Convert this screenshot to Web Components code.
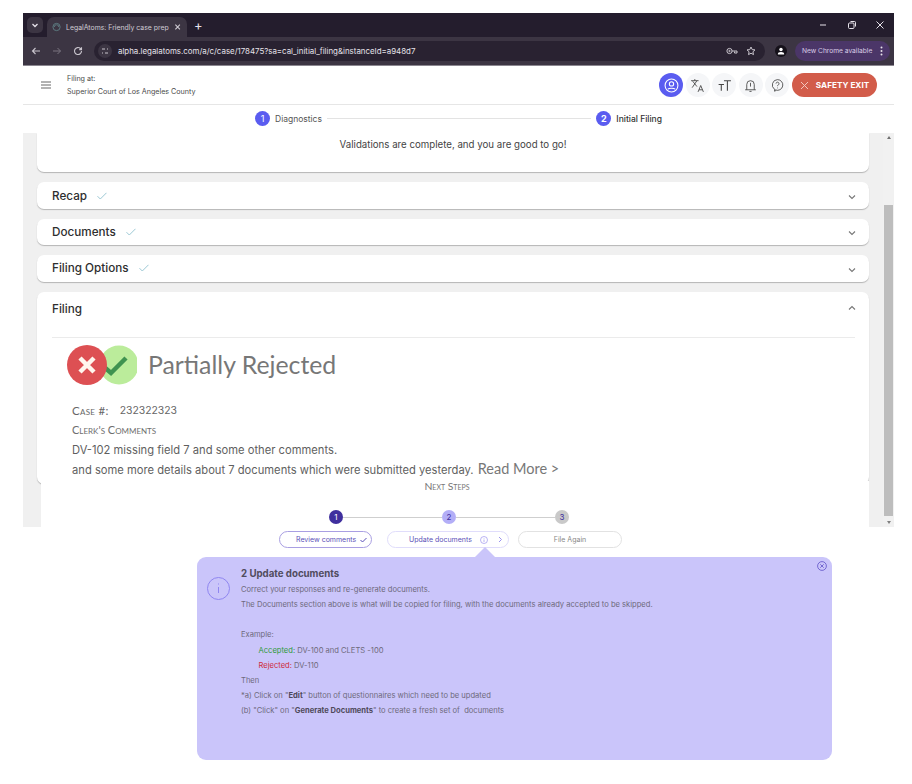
<!DOCTYPE html>
<html lang="en">
<head>
<meta charset="utf-8">
<title>LegalAtoms</title>
<style>
    html, body { margin: 0; background: #fff; font-family: Inter, "Liberation Sans", sans-serif; }
    body { padding: 13px 18px 0 23px; height: 771px; overflow: hidden; }
</style>
</head>
<body>
<chrome-bar></chrome-bar>
<app-header></app-header>
<app-stepper></app-stepper>
<case-content>
    <accordion-card class="first" plain>
        <p style="margin:0;text-align:center;font-size:9.7px;color:#444;">Validations are complete, and you are good to go!</p>
    </accordion-card>
    <accordion-card titulo="Recap" checked></accordion-card>
    <accordion-card titulo="Documents" checked></accordion-card>
    <accordion-card titulo="Filing Options" checked></accordion-card>
    <accordion-card titulo="Filing" open>
        <filing-status></filing-status>
    </accordion-card>
</case-content>
<next-steps></next-steps>

<script>
class ChromeBar extends HTMLElement {
    connectedCallback() {
        this.attachShadow({ mode: 'open' });
        this.shadowRoot.innerHTML = /* html */`
        <style>
            :host { display: block; background: #241d2d; color: #e6e2ea; font-size: 9px; }
            svg { display: block; fill: none; stroke: currentColor; }
            .tabs { height: 24px; display: flex; align-items: flex-end; padding-left: 4px; }
            .tab-list {
                inline-size: 16px; block-size: 16px; margin-bottom: 4px; border-radius: 5px; background: #3c3543;
                display: flex; align-items: center; justify-content: center;
            }
            .tab {
                inline-size: 140px; block-size: 20px; margin-left: 4px; border-radius: 7px 7px 0 0; background: #3c3543;
                display: flex; align-items: center; padding: 0 6px 0 5px; box-sizing: border-box; gap: 5px;
                font-size: 6.9px; color: #cfcbd3;
            }
            .tab span { flex: 1; white-space: nowrap; }
            .plus { margin: 0 0 5px 7px; font-size: 13px; line-height: 14px; }
            .win { margin-left: auto; display: flex; gap: 18px; margin-right: 9px; margin-bottom: 7px; }
            .toolbar {
                height: 28px; background: #3c3543; border-bottom: 1px solid #8b8790; box-sizing: content-box;
                display: flex; align-items: center; padding-left: 8px; color: #c9c5cd;
            }
            .nav { display: flex; gap: 11px; align-items: center; }
            .url {
                flex: 1; margin-left: 11px; block-size: 20px; border-radius: 10px; background: #292231;
                display: flex; align-items: center; padding: 0 9px 0 4px; gap: 6px;
            }
            .site { inline-size: 14px; block-size: 14px; border-radius: 50%; background: #3c3543; display: flex; align-items: center; justify-content: center; }
            .addr { flex: 1; font-size: 7.9px; color: #e6e2ea; white-space: nowrap; }
            .avatar { inline-size: 12px; block-size: 12px; border-radius: 50%; background: #15111a; margin-left: 10px; display: flex; align-items: center; justify-content: center; }
            .update {
                inline-size: 95px; block-size: 20px; margin: 0 4px 0 8px; box-sizing: border-box; border-radius: 10px; background: #4b3668;
                display: flex; align-items: center; justify-content: space-between; padding: 0 7px 0 7px; font-size: 6.65px; color: #d9cde6;
            }
        </style>
        <div class="tabs">
            <div class="tab-list"><svg width="8" height="8" viewBox="0 0 8 8" stroke-width="1.3"><path d="M1.5 3l2.5 2.5L6.5 3"/></svg></div>
            <div class="tab">
                <svg width="10" height="10" viewBox="0 0 10 10" stroke="#5f7f85" style="color:#5f7f85"><circle cx="5" cy="5" r="4"/><path d="M2.5 5a2.5 2.5 0 0 1 5 0"/></svg>
                <span>LegalAtoms: Friendly case prep</span>
                <svg width="8" height="8" viewBox="0 0 8 8" stroke-width="1.2"><path d="M1.5 1.5l5 5M6.5 1.5l-5 5"/></svg>
            </div>
            <div class="plus">+</div>
            <div class="win">
                <svg width="10" height="10" viewBox="0 0 10 10"><path d="M1 5h6"/></svg>
                <svg width="10" height="10" viewBox="0 0 10 10"><rect x="1.5" y="3" width="5.5" height="5.5" rx="1"/><path d="M3.5 1.5h4a1 1 0 0 1 1 1v4"/></svg>
                <svg width="10" height="10" viewBox="0 0 10 10"><path d="M1.5 1.5l7 7M8.5 1.5l-7 7"/></svg>
            </div>
        </div>
        <div class="toolbar">
            <div class="nav">
                <svg width="10" height="10" viewBox="0 0 10 10" stroke-width="1.1"><path d="M9 5H1.5M4.5 2L1.5 5l3 3"/></svg>
                <svg width="10" height="10" viewBox="0 0 10 10" stroke="#7a7580" style="color:#7a7580"><path d="M1 5h7.5M5.5 2l3 3-3 3"/></svg>
                <svg width="10" height="10" viewBox="0 0 10 10" stroke-width="1.1"><path d="M8.5 5A3.5 3.5 0 1 1 7.4 2.5L8.5 3.6M8.5 1.3v2.3H6.2"/></svg>
            </div>
            <div class="url">
                <div class="site"><svg width="8" height="8" viewBox="0 0 8 8"><path d="M1 2h3M6 2h1M1 6h1M4 6h3"/></svg></div>
                <div class="addr">alpha.legalatoms.com/a/c/case/178475?sa=cal_initial_filing&amp;instanceId=a948d7</div>
                <svg width="12" height="10" viewBox="0 0 12 10"><circle cx="3.5" cy="5" r="2.6"/><circle cx="3.5" cy="5" r=".7"/><path d="M6 5h5v2H8.5V5.5"/></svg>
                <svg style="margin-left:2px" width="10" height="10" viewBox="0 0 10 10"><path d="M5 1l1.2 2.6 2.8.3-2.1 1.9.6 2.8L5 7.2 2.5 8.6l.6-2.8L1 3.900l2.800-.3z"/></svg>
            </div>
            <div class="avatar"><svg width="8" height="8" viewBox="0 0 8 8" style="color:#fff"><circle cx="4" cy="2.500" r="1.700" fill="#fff" stroke="none"/><path d="M.8 7.500a3.200 2.400 0 0 1 6.400 0z" fill="#fff" stroke="none"/></svg></div>
            <div class="update"><span>New Chrome available</span>
                <svg width="3" height="10" viewBox="0 0 3 10"><g fill="#e6e2ea" stroke="none"><circle cx="1.500" cy="1.500" r="1"/><circle cx="1.500" cy="5" r="1"/><circle cx="1.500" cy="8.500" r="1"/></g></svg>
            </div>
        </div>`;
    }
}

class AppHeader extends HTMLElement {
    connectedCallback() {
        this.attachShadow({ mode: 'open' });
        this.shadowRoot.innerHTML = /* html */`
        <style>
            :host {
                display: flex; align-items: center; box-sizing: border-box; block-size: 39px;
                border-bottom: 1px solid #e6e6e6; padding: 0 17px 0 18px; color: #444;
            }
            svg { display: block; fill: none; stroke: currentColor; }
            .menu { margin-right: 16px; color: #666; }
            .court { font-size: 7.15px; line-height: 13px; color: #4a4a4a; }
            .acciones { margin-left: auto; display: flex; align-items: center; gap: 2.400px; }
            .circ {
                inline-size: 24px; block-size: 24px; border-radius: 50%; background: #f5f6f8;
                display: flex; align-items: center; justify-content: center; color: #444;
            }
            .circ.on { background: #5a5cf0; color: #fff; }
            .exit {
                margin-left: .6px; inline-size: 85px; block-size: 24px; border-radius: 12px; background: #d25c4a; color: #fff;
                display: flex; align-items: center; justify-content: center; gap: 7px; font-size: 8.2px; font-weight: 700;
            }
        </style>
        <svg class="menu" width="10" height="8" viewBox="0 0 10 8" stroke-width="1"><path d="M0 1h10M0 4h10M0 7h10"/></svg>
        <div class="court">Filing at:<br>Superior Court of Los Angeles County</div>
        <div class="acciones">
            <div class="circ on"><svg width="15" height="15" viewBox="0 0 14 14"><circle cx="7" cy="7" r="6"/><circle cx="7" cy="5.500" r="2"/><path d="M3.500 10.500c1-1.300 6-1.300 7 0"/></svg></div>
            <div class="circ"><svg width="15" height="15" viewBox="0 0 14 14" stroke-width=".8"><path d="M1 2.500h7M4.500 1v1.500M2 9l4.500-6.500M2.500 3l4 5"/><path d="M7.500 13l2.500-6 2.500 6M8.400 11h3.200"/></svg></div>
            <div class="circ"><svg width="15" height="15" viewBox="0 0 14 14" stroke-width="1"><path d="M1.500 6h5M4 6v6M6.500 2.500h6.500M9.700 2.500V12"/></svg></div>
            <div class="circ"><svg width="15" height="15" viewBox="0 0 14 14" stroke-width=".8"><path d="M3.500 11V6a3.500 3.500 0 0 1 7 0v5M2 11h10M6 12.500h2M7 4.500v3.500"/></svg></div>
            <div class="circ"><svg width="15" height="15" viewBox="0 0 14 14" stroke-width=".8"><path d="M7 1.500a5 5 0 1 1-2 9.600L4.500 12.500l-.3-2A5 5 0 0 1 7 1.500z"/><path d="M5.600 5.200a1.400 1.400 0 1 1 2.200 1.200c-.5.300-.8.600-.8 1.200M7 9v.6"/></svg></div>
            <div class="exit">
                <svg width="9" height="9" viewBox="0 0 9 9" stroke="#f2c4bc" style="color:#f2c4bc"><path d="M1 1l7 7M8 1L1 8"/></svg>
                <span>SAFETY EXIT</span>
            </div>
        </div>`;
    }
}

class AppStepper extends HTMLElement {
    connectedCallback() {
        this.attachShadow({ mode: 'open' });
        this.shadowRoot.innerHTML = /* html */`
        <style>
            :host {
                display: flex; align-items: center; block-size: 28px; box-sizing: border-box;
                padding: 0 232px 1px 232px; font-size: 8.5px; color: #555;
            }
            .num {
                inline-size: 15px; block-size: 15px; border-radius: 50%; background: #5a5cf0; color: #fff;
                display: flex; align-items: center; justify-content: center; font-size: 9px;
            }
            .txt { margin-left: 5px; }
            .txt.act { color: #333; font-weight: 500; }
            .linea { flex: 1; block-size: 1px; background: #e3e3e3; margin: 0 5px; }
        </style>
        <div class="num">1</div><div class="txt">Diagnostics</div>
        <div class="linea"></div>
        <div class="num"><b>2</b></div><div class="txt act">Initial Filing</div>`;
    }
}

class CaseContent extends HTMLElement {
    connectedCallback() {
        this.attachShadow({ mode: 'open' });
        this.shadowRoot.innerHTML = /* html */`
        <style>
            :host { display: flex; block-size: 394px; background: #f0f0f0; overflow: hidden; }
            .lista { flex: 1; display: flex; flex-direction: column; gap: 10px; padding: 0 14px; min-width: 0; }
            .barra {
                inline-size: 11px; background: #f1f1f1; display: flex; flex-direction: column;
                align-items: center; justify-content: space-between; padding: 3px 0 3px; box-sizing: border-box;
            }
            .thumb { inline-size: 9px; block-size: 311px; margin-top: 63px; background: #bdbdbd; }
            .tri-up { border: 2.500px solid transparent; border-top: 0; border-bottom: 3px solid #707070; }
            .tri-down { border: 2.500px solid transparent; border-bottom: 0; border-top: 3px solid #808080; margin-top: 2px; }
        </style>
        <div class="lista"><slot></slot></div>
        <div class="barra"><div class="tri-up"></div><div class="thumb"></div><div class="tri-down"></div></div>`;
    }
}

class AccordionCard extends HTMLElement {
    connectedCallback() {
        const titulo = this.getAttribute('titulo') || '';
        const plain = this.hasAttribute('plain');
        const open = this.hasAttribute('open');
        const check = this.hasAttribute('checked')
            ? `<svg class="ok" width="10" height="8" viewBox="0 0 10 8"><path d="M.5 4.200L3.300 7 9.500 .8"/></svg>` : '';
        const chevron = open ? 'M1 4.500l3-3 3 3' : 'M1 1.500l3 3 3-3';
        this.attachShadow({ mode: 'open' });
        this.shadowRoot.innerHTML = /* html */`
        <style>
            :host {
                display: block; background: #fff; border-radius: 7px; box-sizing: border-box; flex: none;
                box-shadow: 0 1px 1px 0 #b5b5b5;
            }
            :host([plain]) { block-size: 39.4px; padding-top: 6px; border-radius: 0 0 7px 7px; }
            :host([open]) { block-size: 192px; }
            header { display: flex; align-items: center; block-size: 26.4px; padding: 0 13px 0 15px; }
            :host([open]) header { block-size: 35px; }
            h2 { margin: 0; font-size: 11.7px; font-weight: 500; color: #2e2e2e; }
            .ok { margin-left: 10px; fill: none; stroke: #9cc8d4; }
            .chev { margin-left: auto; margin-top: 3px; fill: none; stroke: #777; stroke-width: 1.100; }
            :host([open]) .chev { margin-top: -3px; }
            .cuerpo { margin: 10px 14px 0 15px; border-top: 1px solid #ebebeb; }
        </style>
        ${plain ? '<slot></slot>' : `
        <header><h2>${titulo}</h2>${check}
            <svg class="chev" width="8" height="6" viewBox="0 0 8 6"><path d="${chevron}"/></svg>
        </header>
        ${open ? '<div class="cuerpo"><slot></slot></div>' : ''}`}`;
    }
}

class FilingStatus extends HTMLElement {
    connectedCallback() {
        this.attachShadow({ mode: 'open' });
        this.shadowRoot.innerHTML = /* html */`
        <style>
            :host { display: block; padding: 6px 0 0 15px; color: #666; }
            .estado { display: flex; align-items: center; gap: 11px; }
            .estado svg { display: block; }
            h1 { margin: 0; font: 400 24.8px Lato, sans-serif; color: #777; }
            .datos { margin: 17px 0 0 5px; font-family: Lato, sans-serif; }
            .caso { font-size: 11.500px; font-variant: small-caps; letter-spacing: .3px; display: flex; gap: 11px; line-height: 16px; }
            .caso span + span { font-family: Inter, sans-serif; font-variant: normal; font-size: 10.400px; letter-spacing: 0; }
            .clerk { font-size: 11px; font-variant: small-caps; margin-top: 4px; line-height: 14px; color: #6e6e6e; }
            .com { font: 400 11.200px/19.500px Inter, sans-serif; color: #5f5f5f; white-space: nowrap; margin-top: 4px; }
            .mas { font: 400 14.500px Lato, sans-serif; color: #777; margin-left: 1px; }
        </style>
        <div class="estado">
            <svg width="70" height="42" viewBox="0 0 70 42">
                <circle cx="52" cy="21" r="19.500" fill="#bbec9b"/>
                <path d="M36 22l8 7 15-15" fill="none" stroke="#3f9350" stroke-width="4.500"/>
                <circle cx="20" cy="21" r="20" fill="#dd5053"/>
                <path d="M13 14l14 14M27 14L13 28" stroke="#fff6ee" stroke-width="4.500"/>
            </svg>
            <h1>Partially Rejected</h1>
        </div>
        <div class="datos">
            <div class="caso"><span>Case #:</span><span>232322323</span></div>
            <div class="clerk">Clerk's Comments</div>
            <div class="com">DV-102 missing field 7 and some other comments.<br>
            and some more details about 7 documents which were submitted yesterday. <span class="mas">Read More &gt;</span></div>
        </div>`;
    }
}

class NextSteps extends HTMLElement {
    connectedCallback() {
        this.attachShadow({ mode: 'open' });
        this.shadowRoot.innerHTML = /* html */`
        <style>
            :host {
                display: block; position: relative; margin: -46px 25px 0 18px; background: #fff;
                block-size: 46px;
            }
            svg { display: block; fill: none; stroke: currentColor; }
            .titulo { text-align: center; padding-right: 16px; margin-top: -4px; font: 400 10.400px/16px Lato, sans-serif; font-variant: small-caps; color: #777; position: relative; top: -3px; }
            .pasos { display: flex; align-items: center; margin: 13px 0 0 288px; inline-size: 240px; }
            .num {
                inline-size: 14px; block-size: 14px; border-radius: 50%; flex: none;
                display: flex; align-items: center; justify-content: center; font-size: 8px; color: #3f2f9e;
            }
            .n1 { background: #3f2f9e; color: #fff; }
            .n2 { background: #b3aef7; }
            .n3 { background: #c9c9c9; }
            .raya { flex: 1; block-size: 1px; background: #cfcfcf; }
            .pills { display: flex; margin: 7px 0 0 238px; font-size: 7px; color: #5b50b8; }
            .pill {
                box-sizing: border-box; block-size: 17px; border-radius: 9px; border: 1px solid #a99fe2;
                display: flex; align-items: center; justify-content: center; gap: 4px; white-space: nowrap;
            }
            .p1 { inline-size: 93px; justify-content: flex-start; padding-left: 16px; }
            .p2 { inline-size: 122px; margin-left: 15px; border-color: #e0ddfb; justify-content: flex-start; padding-left: 21px; }
            .p3 { inline-size: 104px; margin-left: 9px; border-color: #e2e2e2; color: #888; }
            .p2 .i { margin-left: 4px; color: #9c94ee; }
            .p2 .f { margin-left: 6px; color: #9c94ee; }
            .flecha {
                position: absolute; left: 434px; top: 66px; inline-size: 0; block-size: 0;
                border-left: 10px solid transparent; border-right: 10px solid transparent; border-bottom: 10px solid #cac5fa;
            }
        </style>
        <div>
            <div class="titulo">Next Steps</div>
            <div class="pasos">
                <div class="num n1">1</div><div class="raya"></div>
                <div class="num n2">2</div><div class="raya"></div>
                <div class="num n3">3</div>
            </div>
            <div class="pills">
                <div class="pill p1"><span>Review comments</span><svg width="7" height="6" viewBox="0 0 7 6" stroke-width="1"><path d="M.5 3l2 2L6.500 1"/></svg></div>
                <div class="pill p2"><span>Update documents</span>
                    <svg class="i" width="8" height="8" viewBox="0 0 8 8" stroke-width=".7"><circle cx="4" cy="4" r="3.500"/><path d="M4 3.500V6M4 2v.6"/></svg>
                    <svg class="f" width="5" height="7" viewBox="0 0 5 7" stroke-width="1"><path d="M1 1l2.500 2.500L1 6"/></svg>
                </div>
                <div class="pill p3">File Again</div>
            </div>
            <div class="flecha"></div>
            <step-popup></step-popup>
        </div>`;
    }
}

class StepPopup extends HTMLElement {
    connectedCallback() {
        this.attachShadow({ mode: 'open' });
        this.shadowRoot.innerHTML = /* html */`
        <style>
            :host {
                display: flex; position: relative; box-sizing: border-box; margin: 9px 0 0 156px; inline-size: 635px; block-size: 203px;
                background: #cac5fa; border-radius: 9px; padding: 9px 0 0 10px; color: #6e6a7c;
                font-size: 7.580px; line-height: 15.150px;
            }
            svg { display: block; fill: none; stroke: currentColor; }
            .info { margin-top: 11px; color: #8f86f0; flex: none; }
            .texto { margin-left: 11px; white-space: nowrap; }
            h3 { margin: 0; font-size: 9.700px; line-height: 16px; font-weight: 700; color: #514c5e; }
            p { margin: 0; }
            .sangria { padding-left: 17.500px; }
            .ok { color: #2f9a3a; }
            .no { color: #cf2c3a; }
            b { color: #4f4a5a; font-weight: 700; }
            .cerrar { position: absolute; top: 4px; right: 5px; color: #5f52c8; }
        </style>
        <svg class="info" width="23" height="23" viewBox="0 0 23 23"><circle cx="11.500" cy="11.500" r="11"/><path d="M11.500 10v6M11.500 6.500v1"/></svg>
        <div class="texto">
            <h3>2 Update documents</h3>
            <p>Correct your responses and re-generate documents.</p>
            <p>The Documents section above is what will be copied for filing, with the documents already accepted to be skipped.</p>
            <p>&nbsp;</p>
            <p>Example:</p>
            <p class="sangria"><span class="ok">Accepted:</span> DV-100 and CLETS -100</p>
            <p class="sangria"><span class="no">Rejected:</span> DV-110</p>
            <p>Then</p>
            <p>*a) Click on "<b>Edit</b>" button of questionnaires which need to be updated</p>
            <p>(b) "Click" on "<b>Generate Documents</b>" to create a fresh set of&nbsp; documents</p>
        </div>
        <svg class="cerrar" width="10" height="10" viewBox="0 0 10 10" stroke-width=".8"><circle cx="5" cy="5" r="4.400"/><path d="M3.300 3.300l3.400 3.400M6.700 3.300L3.300 6.700"/></svg>`;
    }
}

customElements.define('chrome-bar', ChromeBar);
customElements.define('app-header', AppHeader);
customElements.define('app-stepper', AppStepper);
customElements.define('case-content', CaseContent);
customElements.define('accordion-card', AccordionCard);
customElements.define('filing-status', FilingStatus);
customElements.define('next-steps', NextSteps);
customElements.define('step-popup', StepPopup);
</script>
</body>
</html>
